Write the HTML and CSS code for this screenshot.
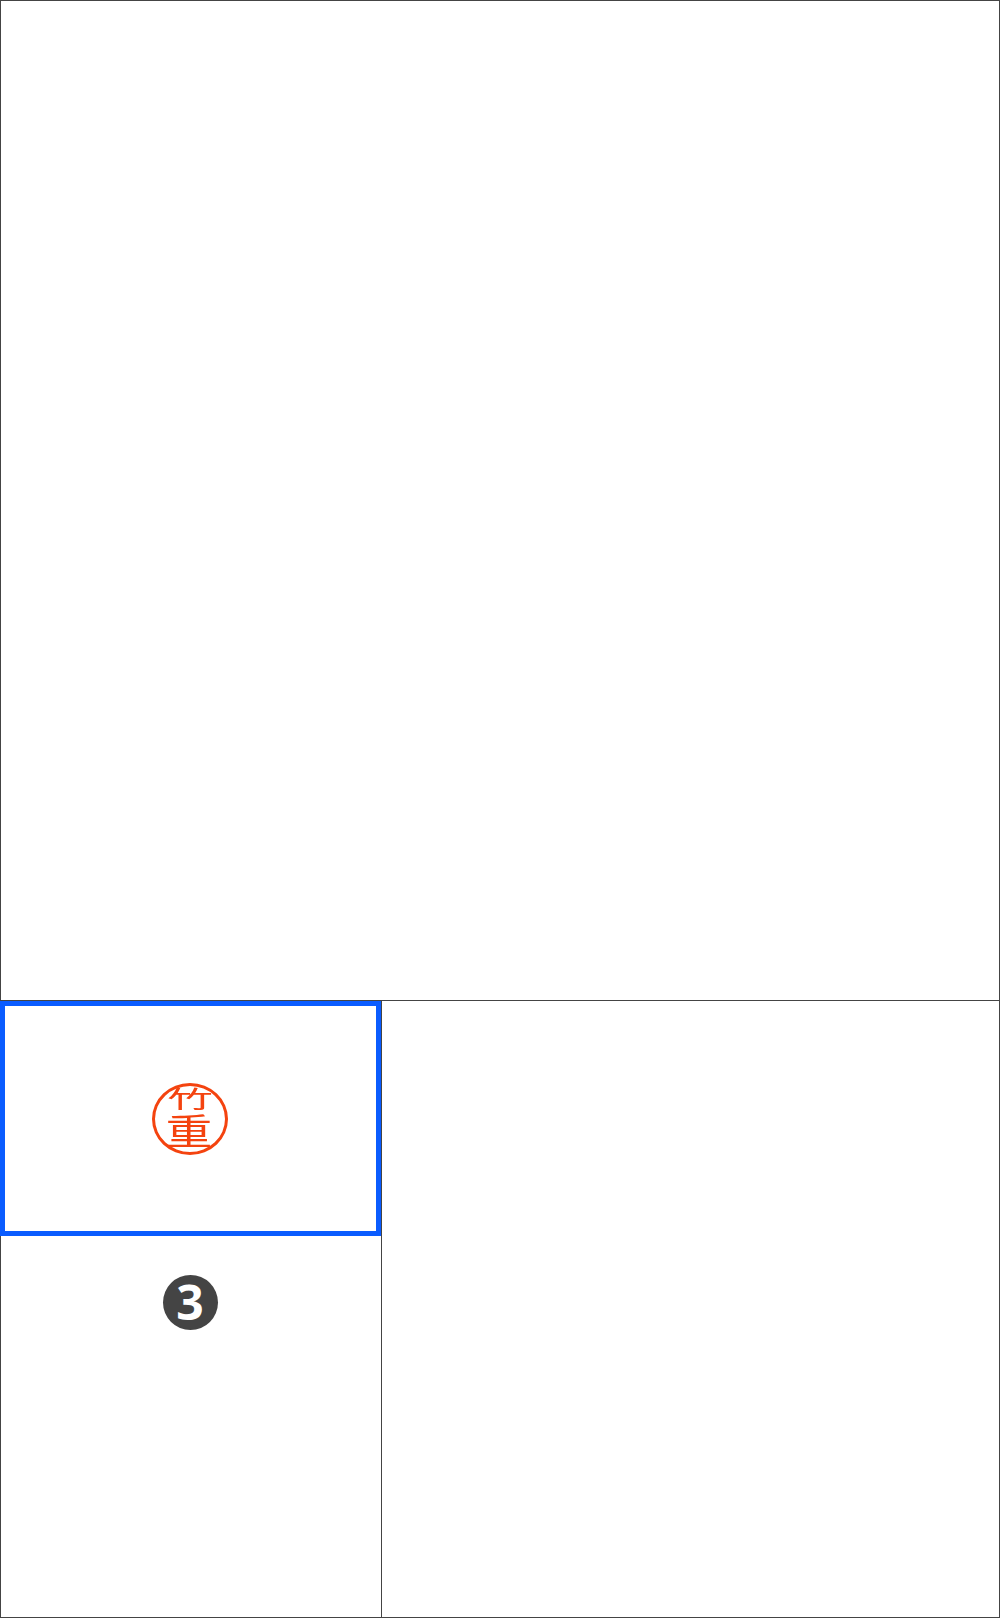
FILE: index.html
```html
<!DOCTYPE html>
<html lang="ja">
<head>
<meta charset="utf-8">
<title>Seal</title>
<link rel="stylesheet" href="styles.css">
</head>
<body>
<div class="page">
  <div class="top"></div>
  <div class="bottom">
    <div class="left">
      <div class="selected">
        <div class="seal">
          <span class="kanji kanji-take">竹</span>
          <span class="kanji kanji-shige">重</span>
        </div>
      </div>
      <div class="below">
        <div class="badge">3</div>
      </div>
    </div>
    <div class="right"></div>
  </div>
</div>
</body>
</html>
```

FILE: styles.css
```css
* { box-sizing: border-box; }
html, body { margin: 0; padding: 0; background: #fff; }
.page { width: 1000px; height: 1618px; display: flex; flex-direction: column; }
.top { height: 1001px; border: 1px solid #444; }
.bottom { flex: 1; display: grid; grid-template-columns: 381px 1fr; min-height: 0; }
.left { display: flex; flex-direction: column; }
.selected {
  height: 235px;
  border: 5px solid #0a5cff;
  display: flex;
  align-items: center;
  justify-content: center;
}
.below {
  flex: 1;
  border-left: 1px solid #444;
  border-bottom: 1px solid #444;
  display: flex;
  justify-content: center;
  padding: 39px 2px 0 0;
}
.right { border-left: 1px solid #444; border-right: 1px solid #444; border-bottom: 1px solid #444; }
.seal {
  width: 76px;
  height: 72px;
  margin-right: 2px;
  border: 3px solid #f4430f;
  border-radius: 50%;
  display: flex;
  flex-direction: column;
  align-items: center;
  color: #f4430f;
  font-family: "Noto Sans CJK JP", sans-serif;
  font-weight: 400;
  filter: blur(0.35px);
}
.kanji { display: block; line-height: 1; }
.kanji-take { font-size: 24px; height: 25px; transform: scale(1.9, 1); }
.kanji-shige { font-size: 36px; height: 36px; transform: scale(1.3, 1); }
.badge {
  width: 55px;
  height: 55px;
  border-radius: 50%;
  background: #444;
  color: #fff;
  font-family: "Open Sans", sans-serif;
  font-weight: 700;
  font-size: 48px;
  line-height: 54px;
  text-align: center;
}
```
